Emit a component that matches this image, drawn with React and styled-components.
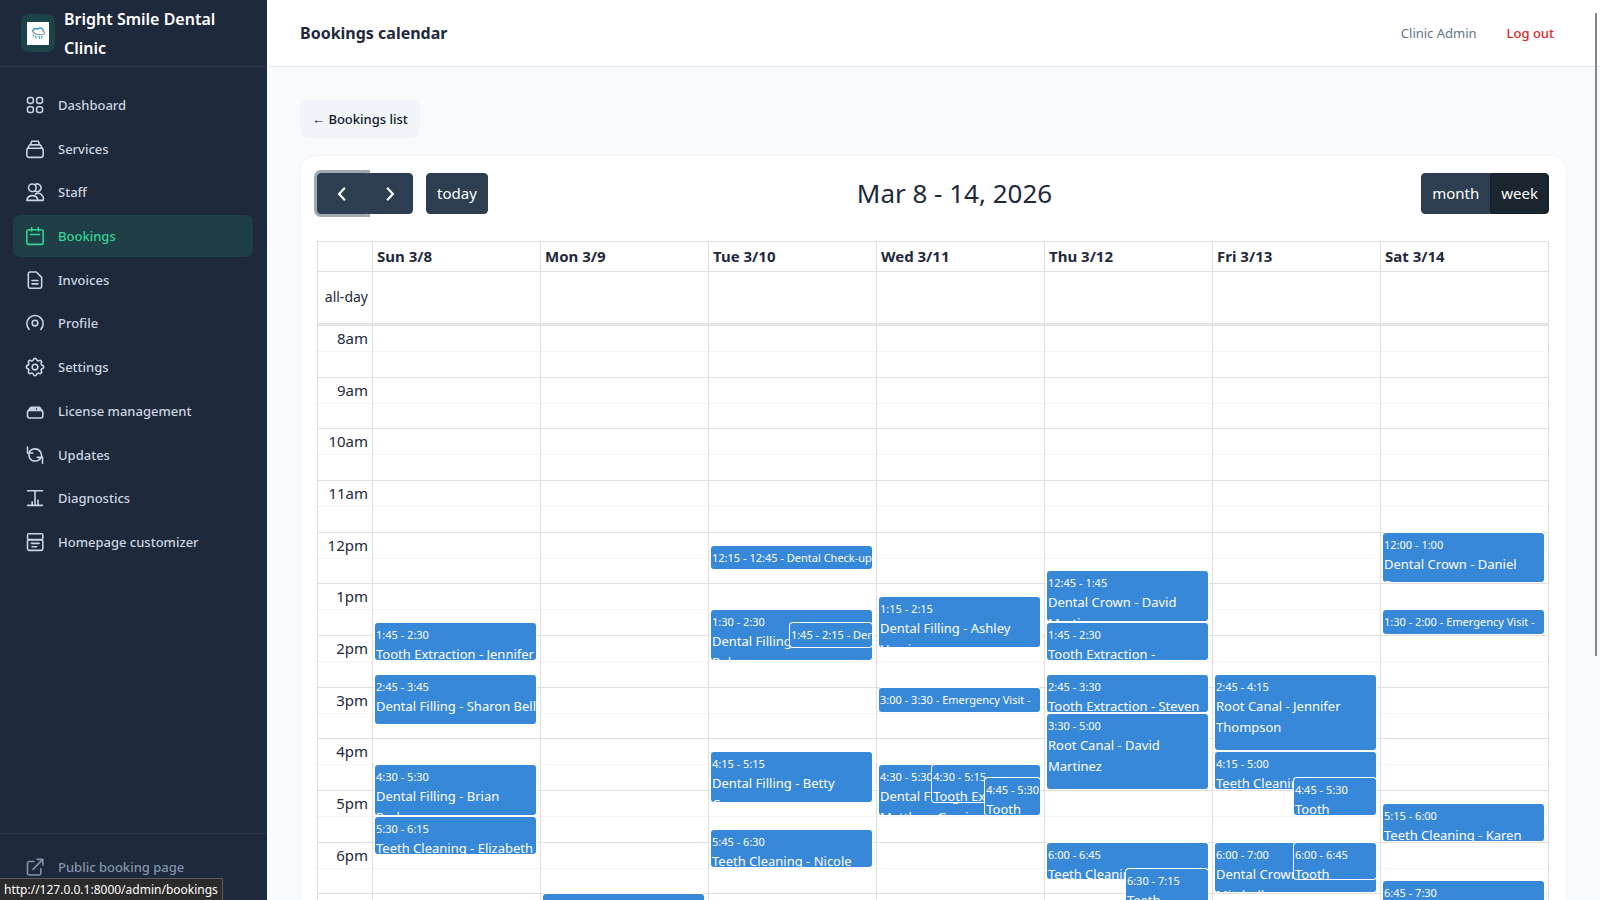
import React from "react";
import styled, { createGlobalStyle, css } from "styled-components";

const GlobalStyle = createGlobalStyle`
  *, *::before, *::after { box-sizing: border-box; }
  body {
    margin: 0;
    background: #f8fafc;
    color: #1e293b;
    font-family: "Noto Sans", "Open Sans", sans-serif;
    font-size: 13px;
  }
  button { font-family: inherit; cursor: pointer; }
  a { text-decoration: none; }
`;

const Shell = styled.div`
  display: flex;
  height: 100vh;
  overflow: hidden;
`;

const Sidebar = styled.aside`
  display: flex;
  flex-direction: column;
  flex: 0 0 267px;
  background: #1e293b;
`;

const Brand = styled.div`
  display: flex;
  align-items: center;
  gap: 9px;
  height: 67px;
  padding: 0 20px 0 21px;
  border-bottom: 1px solid #2a374a;
`;

const LogoTile = styled.span`
  display: grid;
  place-items: center;
  flex: none;
  width: 34px;
  height: 38px;
  border-radius: 8px;
  background: #1c4448;
`;

const BrandName = styled.span`
  padding-top: 2px;
  color: #fff;
  font-size: 16px;
  font-weight: 600;
  line-height: 29px;
`;

const NavList = styled.ul`
  display: grid;
  grid-auto-rows: 1fr;
  gap: 2px;
  height: 479px;
  margin: 17px 0 0;
  padding: 0 14px 0 13px;
  list-style: none;
`;

const NavLink = styled.a`
  display: flex;
  align-items: center;
  gap: 13px;
  height: 100%;
  padding: 0 12px;
  border-radius: 8px;
  color: ${(p) => (p.$active ? "#34d399" : p.$muted ? "#8494ab" : "#cbd5e1")};
  background: ${(p) => (p.$active ? "#1e3f45" : "transparent")};
  font-size: 13px;
  font-weight: 500;
`;

const NavIcon = styled.svg`
  flex: none;
  width: 20px;
  height: 20px;
  fill: none;
  stroke: currentColor;
  stroke-width: 1.9;
  stroke-linecap: round;
  stroke-linejoin: round;
`;

const SidebarFoot = styled.div`
  height: 67px;
  margin-top: auto;
  padding: 12px 13px;
  border-top: 1px solid #2a374a;
`;

const Content = styled.div`
  display: flex;
  flex-direction: column;
  flex: 1;
  min-width: 0;
`;

const TopBar = styled.header`
  display: flex;
  align-items: center;
  flex: 0 0 67px;
  gap: 30px;
  padding: 0 46px 0 33px;
  background: #fff;
  border-bottom: 1px solid #e2e8f0;
`;

const PageTitle = styled.h1`
  flex: 1;
  margin: 0;
  font-size: 16px;
  font-weight: 700;
`;

const UserName = styled.span`
  color: #64748b;
`;

const LogOut = styled.button`
  padding: 0;
  border: 0;
  background: none;
  color: #dc2626;
  font-size: 13px;
  font-weight: 500;
`;

const Main = styled.main`
  display: flex;
  flex-direction: column;
  align-items: flex-start;
  gap: 17px;
  flex: 1;
  min-height: 0;
  padding: 33px;
  overflow-y: auto;
  scrollbar-width: none;
`;

const BackLink = styled.a`
  flex: none;
  padding: 0 12px;
  border-radius: 8px;
  background: #f1f5f9;
  color: #0f172a;
  font-size: 13px;
  font-weight: 500;
  line-height: 38px;
`;

const Card = styled.section`
  flex: none;
  width: 100%;
  padding: 17px 17px 17px 16px;
  border: 1px solid #f1f5f9;
  border-radius: 16px;
  background: #fff;
`;

const Toolbar = styled.div`
  display: flex;
  align-items: center;
  justify-content: space-between;
  margin-bottom: 27px;
`;

const ToolGroup = styled.div`
  display: flex;
  align-items: center;
  gap: 13px;
`;

const ButtonPair = styled.div`
  display: flex;
`;

const ToolButton = styled.button`
  display: grid;
  place-items: center;
  height: 41px;
  padding: 0 10px 2px;
  border: 1px solid ${(p) => (p.$pressed ? "#151e27" : "#2c3e50")};
  border-radius: ${(p) =>
    p.$side === "left" ? "4px 0 0 4px" : p.$side === "right" ? "0 4px 4px 0" : "4px"};
  background: ${(p) => (p.$pressed ? "#1a252f" : "#2c3e50")};
  color: #fff;
  font-size: 15px;
  ${(p) =>
    p.$focused &&
    css`
      box-shadow: 0 0 0 3px rgba(44, 62, 80, 0.45);
    `}
`;

const Chevron = styled.svg`
  width: 20px;
  height: 20px;
  fill: none;
  stroke: currentColor;
  stroke-width: 2.6;
`;

const StepButton = styled(ToolButton)`
  width: ${(p) => (p.$focused ? "50px" : "46px")};
  padding: 0;
`;

const RangeTitle = styled.h2`
  margin: 0;
  font-size: 26px;
  font-weight: 400;
  line-height: 41px;
`;

const line = "1px solid #dfdfdf";

const Calendar = styled.table`
  width: 100%;
  table-layout: fixed;
  border-collapse: separate;
  border-spacing: 0;
  border-top: ${line};
  border-left: ${line};
`;

const AxisCol = styled.col`
  width: 55px;
`;

const DayHead = styled.th`
  height: 30px;
  padding: 0 4px 2px;
  border-right: ${line};
  border-bottom: ${line};
  font-size: 15px;
  font-weight: 700;
  line-height: 20px;
  text-align: left;
`;

const AxisLabel = styled.th`
  height: 51px;
  padding: 0 4px 2px 0;
  border-right: ${line};
  font-size: 14px;
  font-weight: 400;
  text-align: right;
`;

const AllDayCell = styled.td`
  padding: 0;
  border-right: ${line};
`;

const Divider = styled.td`
  height: 3px;
  padding: 0;
  border: ${line};
  border-left: 0;
  background: #ececec;
`;

const BodyCell = styled.td`
  padding: 0;
  border-right: ${line};
  vertical-align: top;
`;

const QuarterGrid = styled.div`
  display: grid;
  grid-template-columns: minmax(0, 1fr);
  grid-template-rows: repeat(48, minmax(0, 1fr));
  height: 620px;
`;

const Slot = styled.div`
  grid-column: 1;
  padding-right: 4px;
  border-bottom: ${(p) => (p.$half ? line : "1px dotted #eee")};
  font-size: 15px;
  line-height: 24px;
  text-align: right;
`;

const EventInset = styled.div`
  grid-column: 1;
  z-index: 1;
  display: grid;
  margin: 0 4px 2px 2px;
  pointer-events: none;
`;

const EventBox = styled.a`
  min-width: 0;
  min-height: 0;
  margin-left: ${(p) => p.$lane || "0"};
  padding: ${(p) => (p.$short ? "0 1px" : "2px 1px")};
  border-radius: 3px;
  box-shadow: 0 0 0 1px #fff;
  background: #3788d8;
  color: #fff;
  font-size: ${(p) => (p.$short ? "11px" : "13px")};
  line-height: ${(p) => (p.$short ? "23px" : "21px")};
  white-space: pre;
  overflow: hidden;
  pointer-events: auto;
`;

const EventTime = styled.time`
  display: block;
  font-size: 11px;
  line-height: 19px;
`;

const StatusBubble = styled.div`
  position: fixed;
  left: 0;
  bottom: 0;
  z-index: 5;
  height: 22px;
  padding: 0 4px;
  border-top: 1px solid #5a5a5a;
  border-right: 1px solid #5a5a5a;
  background: #2b2b2b;
  color: #fff;
  font-size: 12px;
  line-height: 22px;
`;

const ScrollThumb = styled.div`
  position: fixed;
  top: 13px;
  right: 3px;
  z-index: 5;
  width: 2px;
  height: calc(72vh - 5px);
  background: #858585;
`;

const ICONS = {
  dashboard: (
    <>
      <rect x="3" y="3" width="7" height="7" rx="2.4" />
      <rect x="14" y="3" width="7" height="7" rx="2.4" />
      <rect x="3" y="14" width="7" height="7" rx="2.4" />
      <rect x="14" y="14" width="7" height="7" rx="2.4" />
    </>
  ),
  services: (
    <>
      <rect x="2.2" y="11" width="19.6" height="11" rx="2.4" />
      <path d="M3.2 11.2 L5.6 7 H18.4 L20.8 11.2 M6.8 6.6 L8 2.6 H16 L17.2 6.6" />
    </>
  ),
  staff: (
    <>
      <circle cx="8.8" cy="7" r="4.6" />
      <path d="M12 3.2 A4.6 4.6 0 1 1 12 10.8" />
      <path d="M2.2 22 A6.8 6.8 0 0 1 15.6 22 Z" />
      <path d="M12.4 14.6 A6.4 6.4 0 0 1 21.8 22 H15.6" />
    </>
  ),
  bookings: (
    <>
      <rect x="2.2" y="4.4" width="19.6" height="17.6" rx="2.2" />
      <path d="M8 1.8 V6 M16 1.8 V6 M6.4 10.2 H17.6" />
    </>
  ),
  invoices: (
    <path d="M13.6 2.4 H6 A2 2 0 0 0 4 4.4 V19.8 A2 2 0 0 0 6 21.8 H18 A2 2 0 0 0 20 19.8 V8.8 Z M8.4 12.6 H15.6 M8.4 16.6 H15.6" />
  ),
  profile: (
    <>
      <path d="M5 19.6 A9.8 9.8 0 1 1 19 19.6" />
      <circle cx="12" cy="12" r="3.4" />
    </>
  ),
  settings: (
    <>
      <path
        transform="translate(-1.8 -1.8) scale(1.15)"
        strokeWidth="1.7"
        d="M10.3 4.3c.4-1.8 2.9-1.8 3.4 0a1.7 1.7 0 0 0 2.6 1.1c1.5-.9 3.3.8 2.4 2.4a1.7 1.7 0 0 0 1 2.5c1.8.4 1.8 2.9 0 3.4a1.7 1.7 0 0 0-1 2.6c.9 1.5-.9 3.3-2.4 2.4a1.7 1.7 0 0 0-2.6 1c-.4 1.8-2.9 1.8-3.4 0a1.7 1.7 0 0 0-2.6-1c-1.5.9-3.3-.9-2.4-2.4a1.7 1.7 0 0 0-1-2.6c-1.8-.4-1.8-2.9 0-3.4a1.7 1.7 0 0 0 1-2.5c-.9-1.6.9-3.3 2.4-2.4 1 .6 2.3.1 2.6-1.1z"
      />
      <circle cx="12" cy="12" r="3.4" />
    </>
  ),
  license: (
    <>
      <rect x="3" y="11.4" width="18.4" height="9" rx="2.4" />
      <path d="M4 11.4 L7 7.6 H17.4 L20.4 11.4" />
      <path d="M6.6 9.6 H12 M15.4 9.6 H17.6" strokeWidth="2.6" />
    </>
  ),
  updates: (
    <>
      <path d="M3 2.4 V9.6 H9.4 M21 22 V14.8 H14.6" />
      <path d="M4.8 9.4 A7.8 7.8 0 0 1 18.8 8.6 M19.2 14.8 A7.8 7.8 0 0 1 5.4 15.4 L4.6 10 M18.8 8.6 L20.4 14.6" />
    </>
  ),
  diagnostics: (
    <path d="M3 3.2 H21 M3 20.8 H21 M12 3.2 V20.4 M8.6 16.4 V20.4 M15.6 14.4 V20.4" />
  ),
  homepage: (
    <>
      <rect x="3" y="2" width="18.4" height="7" rx="1.8" />
      <rect x="3" y="9.4" width="18.4" height="12.6" rx="1.8" />
      <path d="M7.6 13.6 H17 M8.4 17.6 H14" />
    </>
  ),
  external: (
    <path d="M10.6 5.4 H5 A2 2 0 0 0 3 7.4 V19.6 A2 2 0 0 0 5 21.6 H17 A2 2 0 0 0 19 19.6 V14 M14.6 2.8 H21.4 V9.6 M21 3.2 L9.6 14.8" />
  ),
};

const NAV = [
  ["dashboard", "Dashboard"],
  ["services", "Services"],
  ["staff", "Staff"],
  ["bookings", "Bookings"],
  ["invoices", "Invoices"],
  ["profile", "Profile"],
  ["settings", "Settings"],
  ["license", "License management"],
  ["updates", "Updates"],
  ["diagnostics", "Diagnostics"],
  ["homepage", "Homepage customizer"],
];

const HOURS = ["8am", "9am", "10am", "11am", "12pm", "1pm", "2pm", "3pm", "4pm", "5pm", "6pm", "7pm"];

/* from and to are hours of the day; lane is the share of the column left free before the box */
const DAYS = [
  {
    label: "Sun 3/8",
    events: [
      { from: 13.75, to: 14.5, time: "1:45 - 2:30", title: "Tooth Extraction - Jennifer" },
      { from: 14.75, to: 15.75, time: "2:45 - 3:45", title: "Dental Filling - Sharon Bell" },
      { from: 16.5, to: 17.5, time: "4:30 - 5:30", title: "Dental Filling - Brian\nParker" },
      { from: 17.5, to: 18.25, time: "5:30 - 6:15", title: "Teeth Cleaning - Elizabeth" },
    ],
  },
  { label: "Mon 3/9", events: [{ from: 19, to: 20, time: "7:00 - 8:00", title: "" }] },
  {
    label: "Tue 3/10",
    events: [
      { from: 12.25, to: 12.75, time: "12:15 - 12:45", title: "Dental Check-up -" },
      { from: 13.5, to: 14.5, time: "1:30 - 2:30", title: "Dental Filling\nBaker" },
      { from: 13.75, to: 14.25, time: "1:45 - 2:15", title: "Den", lane: "49%" },
      { from: 16.25, to: 17.25, time: "4:15 - 5:15", title: "Dental Filling - Betty\nCooper" },
      { from: 17.75, to: 18.5, time: "5:45 - 6:30", title: "Teeth Cleaning - Nicole" },
    ],
  },
  {
    label: "Wed 3/11",
    events: [
      { from: 13.25, to: 14.25, time: "1:15 - 2:15", title: "Dental Filling - Ashley\nHarris" },
      { from: 15, to: 15.5, time: "3:00 - 3:30", title: "Emergency Visit -" },
      { from: 16.5, to: 17.5, time: "4:30 - 5:30", title: "Dental Filling\nMatthew Garcia" },
      { from: 16.5, to: 17.25, time: "4:30 - 5:15", title: "Tooth Ex", lane: "33%" },
      { from: 16.75, to: 17.5, time: "4:45 - 5:30", title: "Tooth", lane: "66%" },
    ],
  },
  {
    label: "Thu 3/12",
    events: [
      { from: 12.75, to: 13.75, time: "12:45 - 1:45", title: "Dental Crown - David\nMartinez" },
      { from: 13.75, to: 14.5, time: "1:45 - 2:30", title: "Tooth Extraction -" },
      { from: 14.75, to: 15.5, time: "2:45 - 3:30", title: "Tooth Extraction - Steven" },
      { from: 15.5, to: 17, time: "3:30 - 5:00", title: "Root Canal - David\nMartinez" },
      { from: 18, to: 18.75, time: "6:00 - 6:45", title: "Teeth Cleaning" },
      { from: 18.5, to: 19.25, time: "6:30 - 7:15", title: "Teeth", lane: "49%" },
    ],
  },
  {
    label: "Fri 3/13",
    events: [
      { from: 14.75, to: 16.25, time: "2:45 - 4:15", title: "Root Canal - Jennifer\nThompson" },
      { from: 16.25, to: 17, time: "4:15 - 5:00", title: "Teeth Cleaning" },
      { from: 16.75, to: 17.5, time: "4:45 - 5:30", title: "Tooth", lane: "49%" },
      { from: 18, to: 19, time: "6:00 - 7:00", title: "Dental Crown\nMitchell" },
      { from: 18, to: 18.75, time: "6:00 - 6:45", title: "Tooth", lane: "49%" },
    ],
  },
  {
    label: "Sat 3/14",
    events: [
      { from: 12, to: 13, time: "12:00 - 1:00", title: "Dental Crown - Daniel\nPerez" },
      { from: 13.5, to: 14, time: "1:30 - 2:00", title: "Emergency Visit -" },
      { from: 17.25, to: 18, time: "5:15 - 6:00", title: "Teeth Cleaning - Karen" },
      { from: 18.75, to: 19.5, time: "6:45 - 7:30", title: "" },
    ],
  },
];

function CalendarEvent({ from, to, time, title, lane }) {
  const short = to - from <= 0.5;
  const gridRow = `${(from - 8) * 4 + 1} / ${(to - 8) * 4 + 1}`;
  return (
    <EventInset style={{ gridRow }}>
      <EventBox href="#event" $short={short} $lane={lane}>
        {short ? (
          `${time} - ${title}`
        ) : (
          <>
            <EventTime>{time}</EventTime>
            {title}
          </>
        )}
      </EventBox>
    </EventInset>
  );
}

function Slots({ labelled }) {
  return HOURS.map((hour, i) => (
    <React.Fragment key={hour}>
      <Slot style={{ gridRow: `${i * 4 + 1} / span 2` }}>{labelled ? hour : null}</Slot>
      <Slot $half style={{ gridRow: `${i * 4 + 3} / span 2` }} />
    </React.Fragment>
  ));
}

function Logo() {
  return (
    <LogoTile>
      <svg width="22" height="23" viewBox="0 0 22 23" fill="none" strokeLinecap="round">
        <rect width="22" height="23" fill="#fff" />
        <path d="M6 8.6 C6.6 6 8.6 6 10.4 7 C12.6 5.4 15.6 5.4 16 8.4" stroke="#2e9cc4" strokeWidth="1.5" />
        <path d="M5.2 8.4 C6 12 12 13.8 17 12 C18 11 17.6 9.8 16.4 9.2" stroke="#8a949c" strokeWidth="1.2" />
        <path d="M8.6 14 L9.2 16 M12 14.4 L12.6 16.4 M15 14.4 L14.6 16" stroke="#3aa6cc" strokeWidth="1.2" />
        <path d="M6.2 12.6 L6.8 14" stroke="#2e9cc4" />
      </svg>
    </LogoTile>
  );
}

export default function App() {
  return (
    <>
      <GlobalStyle />
      <Shell>
        <Sidebar>
          <Brand>
            <Logo />
            <BrandName>Bright Smile Dental Clinic</BrandName>
          </Brand>
          <nav>
            <NavList>
              {NAV.map(([icon, label]) => (
                <li key={icon}>
                  <NavLink href={`#${icon}`} $active={icon === "bookings"}>
                    <NavIcon viewBox="0 0 24 24">{ICONS[icon]}</NavIcon>
                    {label}
                  </NavLink>
                </li>
              ))}
            </NavList>
          </nav>
          <SidebarFoot>
            <NavLink href="#public" $muted>
              <NavIcon viewBox="0 0 24 24">{ICONS.external}</NavIcon>
              Public booking page
            </NavLink>
          </SidebarFoot>
        </Sidebar>

        <Content>
          <TopBar>
            <PageTitle>Bookings calendar</PageTitle>
            <UserName>Clinic Admin</UserName>
            <LogOut type="button">Log out</LogOut>
          </TopBar>
          <Main>
            <BackLink href="#list">← Bookings list</BackLink>
            <Card>
              <Toolbar>
                <ToolGroup>
                  <ButtonPair>
                    <StepButton type="button" aria-label="Previous week" $side="left" $focused>
                      <Chevron viewBox="0 0 24 24">
                        <path d="M15.5 4.5 L8.5 12 L15.5 19.5" />
                      </Chevron>
                    </StepButton>
                    <StepButton type="button" aria-label="Next week" $side="right">
                      <Chevron viewBox="0 0 24 24">
                        <path d="M8.5 4.5 L15.5 12 L8.5 19.5" />
                      </Chevron>
                    </StepButton>
                  </ButtonPair>
                  <ToolButton type="button">today</ToolButton>
                </ToolGroup>
                <RangeTitle>Mar 8 - 14, 2026</RangeTitle>
                <ToolGroup>
                  <ButtonPair>
                    <ToolButton type="button" $side="left">month</ToolButton>
                    <ToolButton type="button" $side="right" $pressed>week</ToolButton>
                  </ButtonPair>
                </ToolGroup>
              </Toolbar>

              <Calendar>
                <colgroup>
                  <AxisCol />
                  {DAYS.map((d) => (
                    <col key={d.label} />
                  ))}
                </colgroup>
                <thead>
                  <tr>
                    <DayHead as="td" />
                    {DAYS.map((d) => (
                      <DayHead key={d.label} scope="col">{d.label}</DayHead>
                    ))}
                  </tr>
                </thead>
                <tbody>
                  <tr>
                    <AxisLabel scope="row">all-day</AxisLabel>
                    {DAYS.map((d) => (
                      <AllDayCell key={d.label} />
                    ))}
                  </tr>
                  <tr>
                    <Divider colSpan={8} />
                  </tr>
                  <tr>
                    <BodyCell>
                      <QuarterGrid>
                        <Slots labelled />
                      </QuarterGrid>
                    </BodyCell>
                    {DAYS.map((d) => (
                      <BodyCell key={d.label}>
                        <QuarterGrid>
                          <Slots />
                          {d.events.map((e) => (
                            <CalendarEvent key={`${e.time}${e.title}`} {...e} />
                          ))}
                        </QuarterGrid>
                      </BodyCell>
                    ))}
                  </tr>
                </tbody>
              </Calendar>
            </Card>
          </Main>
        </Content>
      </Shell>
      <StatusBubble>http://127.0.0.1:8000/admin/bookings</StatusBubble>
      <ScrollThumb />
    </>
  );
}
